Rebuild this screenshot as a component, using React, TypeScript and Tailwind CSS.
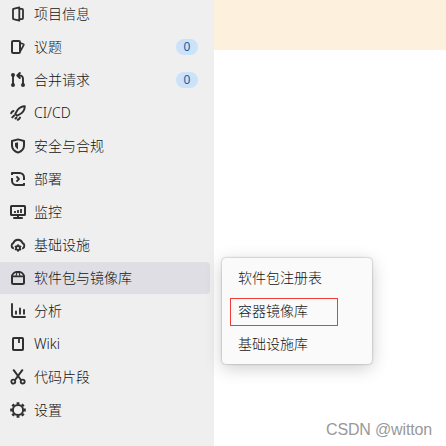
import type { ReactNode } from "react";

const icons: Record<string, ReactNode> = {
  project: (
    <>
      <path d="M9.3 1.3 3.4 2.8a.6.6 0 0 0-.4.6v9.2c0 .3.2.5.4.6l5.9 1.5z" strokeWidth="1.8" />
      <path d="M9.5 2.9H12a1 1 0 0 1 1 1v8.2a1 1 0 0 1-1 1H9.5" strokeWidth="1.8" />
    </>
  ),
  issues: (
    <>
      <rect x="2" y="2" width="8" height="12" rx="1.2" />
      <path d="m10.3 4 2.9 1a.8.8 0 0 1 .5 1.1L10.4 12" strokeWidth="1.7" />
    </>
  ),
  merge: (
    <>
      <path d="M3 3v10M13 13V6.5a3 3 0 0 0-3-3H8M9.8 1 7.3 3.5 9.8 6" strokeWidth="1.9" />
      <g fill="currentColor" stroke="none">
        <circle cx="3" cy="3" r="2" />
        <circle cx="3" cy="13" r="2" />
        <circle cx="13" cy="13" r="2" />
      </g>
    </>
  ),
  rocket: (
    <>
      <path d="M14.8 1.2c-3.3.1-5.6 1.4-7.3 3.8L5.2 8.9l1.9 1.9 3.9-2.3c2.4-1.7 3.7-4 3.8-7.3z" strokeWidth="1.9" />
      <path d="M1.2 8.2c.4-1.1 1.1-1.9 2.2-2.2M7.8 14.8c1.1-.4 1.9-1.1 2.2-2.2M4.2 10.5l-1.9 1.9M6.3 12.7l-.8.8" strokeWidth="2" />
    </>
  ),
  shield: (
    <>
      <path d="M8 1.4 14 3v4.4c0 3.4-2.6 5.9-6 7.2-3.4-1.3-6-3.8-6-7.2V3z" />
      <path d="M8 4.2v7.2C6.2 10.4 5 9 5 7.3V5z" fill="currentColor" stroke="none" />
    </>
  ),
  deploy: (
    <>
      <path
        d="M2 4V2h7.5A4.5 4.5 0 0 1 14 6.5V9M14 12v2H6.5A4.5 4.5 0 0 1 2 9.5V7"
        strokeLinecap="butt"
      />
      <path d="m7 6 2 2-2 2" strokeWidth="1.8" />
    </>
  ),
  monitor: (
    <>
      <rect x="1" y="2" width="14" height="9" rx=".6" />
      <path d="M8 11v3M4 14h8" />
      <path d="M5 7v2M8 6v3M11 5v4" strokeWidth="1.8" strokeLinecap="butt" />
    </>
  ),
  cloud: (
    <>
      <path d="M3.1 11.2A2.9 2.9 0 0 1 3.4 6a4.8 4.8 0 0 1 9.1 0 2.9 2.9 0 0 1 .4 5.2" strokeWidth="1.9" />
      <circle cx="8" cy="11" r="2" strokeWidth="1.8" />
      <path d="M8 7.3v1.6M8 13.1v1.6M4.8 9.15l1.4.8M9.8 12l1.4.8M11.2 9.15l-1.4.8M6.2 12l-1.4.8" strokeWidth="1.5" strokeLinecap="butt" />
    </>
  ),
  package: (
    <>
      <path d="M2 6.2v6.3c0 .9.6 1.5 1.5 1.5h9c.9 0 1.5-.6 1.5-1.5V6.2" />
      <path d="M2 6.3C2 4.2 4.4 2 6.5 2h3C11.6 2 14 4.2 14 6.3z" strokeWidth="1.8" />
      <path d="M7.1 2.1 5.9 6.3M8.9 2.1l1.2 4.2" strokeWidth="1.1" />
    </>
  ),
  chart: <path d="M2 1v11a2 2 0 0 0 2 2h11M6 8.5v2.3M10 5.5v5.3M14 7v3.8" strokeWidth="1.9" />,
  book: (
    <>
      <rect x="3" y="2" width="10" height="12" rx=".8" />
      <path d="M9 2v5" strokeLinecap="butt" strokeWidth="1.8" />
    </>
  ),
  scissors: (
    <>
      <path d="m3.7 1.2 6.9 9.3M12.3 1.2 5.4 10.5" />
      <circle cx="3.3" cy="12.6" r="2" strokeWidth="1.8" />
      <circle cx="12.7" cy="12.6" r="2" strokeWidth="1.8" />
    </>
  ),
  gear: (
    <>
      <circle cx="8" cy="8" r="5.1" />
      <path
        d="M8 .2v2.3M8 13.5v2.3M.2 8h2.3M13.5 8h2.3M2.4 2.4l1.6 1.6M12 12l1.6 1.6M13.6 2.4 12 4M4 12l-1.6 1.6"
        strokeWidth="2.8"
        strokeLinecap="butt"
      />
    </>
  ),
};

type Item = { icon: string; label: string; count?: number; active?: boolean };

const items: Item[] = [
  { icon: "project", label: "项目信息" },
  { icon: "issues", label: "议题", count: 0 },
  { icon: "merge", label: "合并请求", count: 0 },
  { icon: "rocket", label: "CI/CD" },
  { icon: "shield", label: "安全与合规" },
  { icon: "deploy", label: "部署" },
  { icon: "monitor", label: "监控" },
  { icon: "cloud", label: "基础设施" },
  { icon: "package", label: "软件包与镜像库", active: true },
  { icon: "chart", label: "分析" },
  { icon: "book", label: "Wiki" },
  { icon: "scissors", label: "代码片段" },
  { icon: "gear", label: "设置" },
];

function SidebarItem({ icon, label, count, active }: Item) {
  return (
    <li
      className={`flex h-8 items-center rounded-r pr-3 pl-2.5 ${active ? "bg-[#dfdee5]" : ""}`}
    >
      <svg
        viewBox="0 0 16 16"
        className="mr-2 size-4 shrink-0 fill-none stroke-current text-[#303030]"
        strokeWidth="2"
        strokeLinecap="round"
        strokeLinejoin="round"
      >
        {icons[icon]}
      </svg>
      <span className="grow">{label}</span>
      {count !== undefined && (
        <span className="flex h-4 w-[22px] items-center justify-center rounded-full bg-[#cbe2f9] text-xs font-normal text-[#1b5c9f]">
          {count}
        </span>
      )}
    </li>
  );
}

export default function App() {
  return (
    <div className="relative flex h-[446px] w-[446px] overflow-hidden bg-white font-['Noto_Sans','Noto_Sans_CJK_SC',sans-serif] text-sm leading-5 font-light text-[#141414]">
      <nav className="w-[214px] shrink-0 bg-[#efefef] pr-1">
        <ul className="-mt-0.5 flex flex-col gap-px">
          {items.map((item) => (
            <SidebarItem key={item.label} {...item} />
          ))}
        </ul>
      </nav>
      <main className="grow">
        <div className="h-[50px] bg-[#fdf1dd]" />
      </main>
      <ul className="absolute top-[258px] left-[222px] flex h-[106px] w-[150px] flex-col gap-[5px] rounded bg-[#fafafa] px-2 pt-[7px] shadow-[0_0_2px_rgba(0,0,0,0.4),0_4px_18px_rgba(0,0,0,0.2)]">
        <li className="flex h-7 items-center pb-0.5 pl-2">软件包注册表</li>
        <li className="flex h-7 w-[108px] items-center border border-[#f23c37] pb-0.5 pl-[7px]">容器镜像库</li>
        <li className="flex h-7 items-center pb-0.5 pl-2">基础设施库</li>
      </ul>
      <div className="absolute top-[420px] left-[326px] font-['Liberation_Sans',sans-serif] text-base leading-5 font-normal tracking-[-0.15px] whitespace-nowrap text-[#999]">
        CSDN @witton
      </div>
    </div>
  );
}
